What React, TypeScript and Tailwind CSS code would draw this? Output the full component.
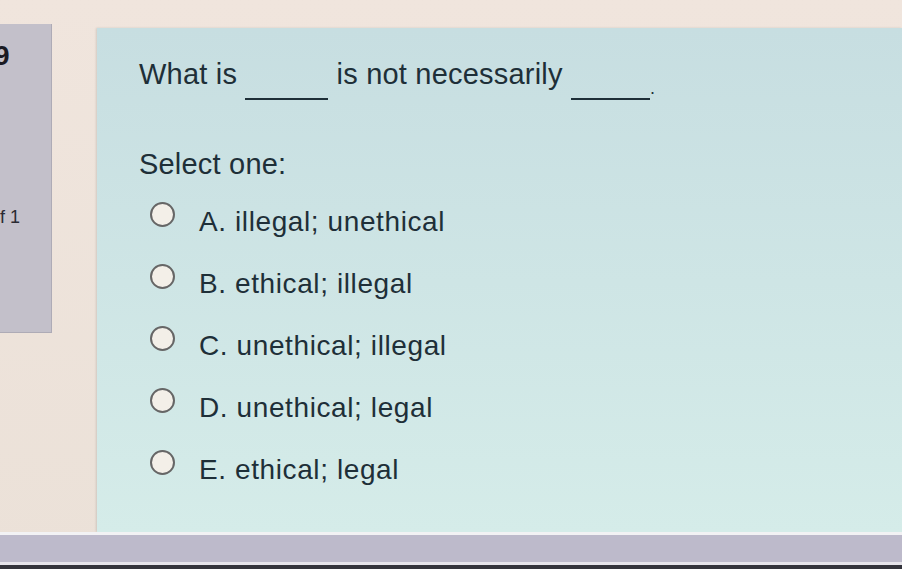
import React from "react";

const options = [
  "A. illegal; unethical",
  "B. ethical; illegal",
  "C. unethical; illegal",
  "D. unethical; legal",
  "E. ethical; legal",
];

const Blank = ({ width }: { width: string }) => (
  <span className={`inline-block ${width} h-[36px] border-b-2 border-[#1e2f38] align-[-16px]`} />
);

const App = () => {
  return (
    <div
      className="flex h-[569px] w-[902px] flex-col overflow-hidden bg-gradient-to-b from-[#f0e5dd] to-[#ebe1d8] text-[#1e2f38]"
      style={{ fontFamily: '"Liberation Sans", Arial, sans-serif' }}
    >
      <div className="flex items-start pt-[24px]">
        {/* question info panel */}
        <div className="flex h-[309px] w-[52px] flex-col overflow-hidden border-b border-r border-[#aeabb6] bg-[#c3c0ca]">
          <span className="-ml-[6px] mt-[18px] text-[28px] font-bold leading-none text-[#1a1a22]">
            9
          </span>
          <span className="-ml-[10px] mt-[138px] whitespace-nowrap text-[18px] leading-none text-[#2a2a32]">
            of 1
          </span>
        </div>

        {/* question card */}
        <div className="ml-[45px] mt-[4px] h-[504px] flex-1 bg-gradient-to-b from-[#c7dee1] to-[#d5ece9] pl-[42px] pt-[30px] shadow-[-1px_0_2px_rgba(0,0,0,0.12)]">
          <p className="h-[32px] whitespace-nowrap text-[29px] leading-[32px] tracking-[0.2px]">
            What is <Blank width="w-[83px]" /> is not necessarily{" "}
            <Blank width="w-[79px]" />
            <span className="relative top-[10px] text-[18px]">.</span>
          </p>
          <p className="mt-[58px] h-[32px] text-[29px] leading-[32px] tracking-[0.2px]">
            Select one:
          </p>
          <div className="mt-[26px] flex flex-col gap-[30px] pl-[11px]">
            {options.map((opt) => (
              <label key={opt} className="flex h-[32px] items-start gap-[24px]">
                <span className="-mt-[4px] size-[25px] shrink-0 rounded-full border-[2.5px] border-[#666666] bg-[#f3efe8]" />
                <span className="whitespace-nowrap text-[28px] leading-[32px] tracking-[0.6px]">
                  {opt}
                </span>
              </label>
            ))}
          </div>
        </div>
      </div>

      {/* bottom bar */}
      <div className="h-[30px] border-t-[3px] border-[#f2f2f4] bg-[#bdbacb]" />
      <div className="h-[3px] bg-[#e6e4ea]" />
      <div className="flex-1 bg-[#34343c]" />
    </div>
  );
};

export default App;
